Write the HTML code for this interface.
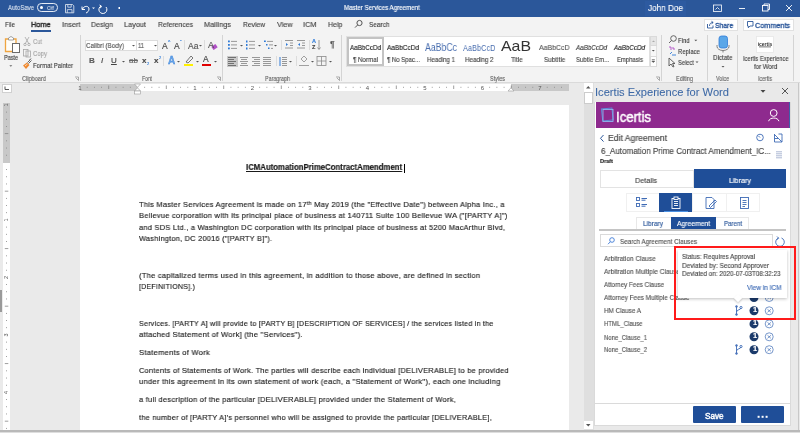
<!DOCTYPE html>
<html><head><meta charset="utf-8">
<style>
*{box-sizing:border-box;margin:0;padding:0}
html,body{width:800px;height:433px;overflow:hidden;background:#F3F3F3;font-family:"Liberation Sans",sans-serif}
.a{position:absolute}
.t{position:absolute;white-space:nowrap;line-height:1;transform-origin:0 0;font-family:"Liberation Sans",sans-serif;z-index:3;will-change:transform;-webkit-text-stroke-width:0.15px}
.d{-webkit-text-stroke:0.18px #1a1a1a}
svg{position:absolute;overflow:visible;will-change:transform}
</style></head><body>
<!-- title bar -->
<div class="a" style="left:0;top:0;width:800px;height:17px;background:#2B579A"></div>
<div class="a" style="left:645px;top:1px;width:41px;height:15px;background:#2D5AA0"></div>
<!-- autosave toggle -->
<div class="a" style="left:37px;top:3.3px;width:20.8px;height:8.4px;border:0.9px solid #E6ECF5;border-radius:4.2px"></div>
<div class="a" style="left:40px;top:5.8px;width:3.4px;height:3.4px;background:#fff;border-radius:50%"></div>
<!-- qat icons -->
<svg style="left:0;top:0" width="800" height="17">
 <g fill="none" stroke="#fff" stroke-width="1">
  <path d="M65.5 4.5 H72.5 L73.8 5.8 V12.8 H65.5 Z" stroke-width="0.85" stroke="#DDE5F0"/>
  <path d="M67.8 4.5 V7.2 H71.2 V4.5" stroke-width="0.8" stroke="#DDE5F0"/>
  <path d="M67.3 12.8 V9.6 H72 V12.8" stroke-width="0.8" stroke="#DDE5F0"/>
  <path d="M82 6.5 L82 9.5 L85 9.5" />
  <path d="M82.5 9 C84 5.5 89 5.5 89 9 C89 11 87.5 12.5 86 13" />
  <path d="M101 6 A4 4 0 1 0 106 7" />
  <path d="M99.5 5 L101.5 6.2 L100.3 8.2" />
 </g>
 <path d="M92 7.5 L95 7.5 L93.5 9 Z" fill="#fff"/>
 <rect x="118.5" y="7" width="1.5" height="2" fill="#fff"/>
 <g fill="none" stroke="#fff" stroke-width="0.9">
  <rect x="713.5" y="5" width="8" height="6.5" stroke-width="0.8"/>
  <path d="M715.5 9.5 L717.5 7.5 L719.5 9.5" stroke-width="0.8"/>
  <path d="M739 8.5 H745"/>
  <rect x="762.5" y="5.5" width="5.5" height="5.5"/>
  <path d="M764 5.5 V4 H769.5 V9.5 H768"/>
  <path d="M786 5 L792 11 M792 5 L786 11"/>
 </g>
</svg>
<!-- tabs row & ribbon bg -->
<div class="a" style="left:0;top:17px;width:800px;height:65px;background:#F3F3F3"></div>
<div class="a" style="left:31px;top:30px;width:20px;height:2px;background:#2B579A"></div>
<!-- search icon -->
<svg style="left:0;top:0" width="800" height="40">
 <g fill="none" stroke="#555" stroke-width="1">
  <circle cx="359.5" cy="23" r="2.6"/>
  <path d="M357.6 25 L355 27.6"/>
 </g>
</svg>
<!-- share / comments -->
<div class="a" style="left:704px;top:19px;width:34px;height:11.5px;background:#fff;border:1px solid #E1E1E1"></div>
<div class="a" style="left:743px;top:19px;width:51px;height:11.5px;background:#fff;border:1px solid #E1E1E1"></div>
<svg style="left:0;top:0" width="800" height="40">
 <g fill="none" stroke="#2B579A" stroke-width="0.9">
  <path d="M707.5 24 V28 H713 V25.5"/>
  <path d="M709.5 26 C709.5 23.5 711 22.5 713 22.5 M711.5 21.3 L713.2 22.5 L711.5 23.8"/>
  <path d="M747.5 21.5 H753 V26 H750 L748.3 27.8 V26 H747.5 Z"/>
 </g>
</svg>
<!-- ribbon bottom border -->
<div class="a" style="left:0;top:81.5px;width:800px;height:1px;background:#DADADA"></div>
<!-- group separators -->
<div class="a" style="left:80px;top:35px;width:1px;height:46px;background:#D4D4D4"></div>
<div class="a" style="left:222px;top:35px;width:1px;height:46px;background:#D4D4D4"></div>
<div class="a" style="left:341px;top:35px;width:1px;height:46px;background:#D4D4D4"></div>
<div class="a" style="left:661px;top:35px;width:1px;height:46px;background:#D4D4D4"></div>
<div class="a" style="left:707px;top:35px;width:1px;height:46px;background:#D4D4D4"></div>
<div class="a" style="left:737px;top:35px;width:1px;height:46px;background:#D4D4D4"></div>
<div class="a" style="left:793px;top:35px;width:1px;height:46px;background:#D4D4D4"></div>
<!-- small separators -->
<div class="a" style="left:184px;top:40px;width:1px;height:10px;background:#DCDCDC"></div>
<div class="a" style="left:204px;top:40px;width:1px;height:10px;background:#DCDCDC"></div>
<div class="a" style="left:163px;top:56px;width:1px;height:10px;background:#DCDCDC"></div>
<div class="a" style="left:281px;top:40px;width:1px;height:10px;background:#DCDCDC"></div>
<div class="a" style="left:309px;top:40px;width:1px;height:10px;background:#DCDCDC"></div>
<div class="a" style="left:276px;top:56px;width:1px;height:10px;background:#DCDCDC"></div>
<div class="a" style="left:296px;top:56px;width:1px;height:10px;background:#DCDCDC"></div>
<!-- font boxes -->
<div class="a" style="left:85px;top:39.5px;width:52px;height:11.5px;background:#fff;border:1px solid #DCDCDC"></div>
<div class="a" style="left:136px;top:39.5px;width:22px;height:11.5px;background:#fff;border:1px solid #DCDCDC"></div>
<!-- align-left highlight -->
<div class="a" style="left:226.5px;top:55.8px;width:11.5px;height:11px;background:#C8C8C8"></div>
<!-- styles gallery -->
<div class="a" style="left:346px;top:35.5px;width:304px;height:31.5px;background:#fff;border:1px solid #E0E0E0"></div>
<div class="a" style="left:347px;top:37px;width:37px;height:29px;border:2px solid #C3C3C3"></div>
<div class="a" style="left:650px;top:35.5px;width:6.5px;height:31.5px;background:#F8F8F8;border:1px solid #E0E0E0"></div>
<div class="a" style="left:650px;top:35.5px;width:6.5px;height:10.5px;background:#E6E6E6;border:1px solid #DADADA"></div>
<div class="a" style="left:650px;top:56px;width:6.5px;height:11px;border:1px solid #DADADA;background:#fff"></div>
<svg style="left:0;top:0" width="800" height="90"><path d="M652 42 h3 l-1.5 -1.5z" fill="#aaa"/><path d="M651.8 59.5 h3 M651.8 61 h3 l-1.5 1.5z" stroke="#555" stroke-width="0.6" fill="#555"/></svg>
<svg style="left:0;top:0" width="800" height="90">
 <!-- ribbon icons -->
 <!-- paste clipboard -->
 <g fill="none" stroke-width="1.2">
  <path d="M5.5 39 H16 V51.5 H5.5 Z" stroke="#EFA540" fill="#FFFDF8" stroke-width="1.3"/>
  <path d="M8.5 40 V38 L11 36.5 L13.5 38 V40 Z" stroke="#8a8a8a" fill="#fff" stroke-width="0.8"/>
  <rect x="12.5" y="43.5" width="7" height="9" stroke="#6B6B6B" fill="#fff" stroke-width="1"/>
 </g>
 <path d="M9.3 65.3 L12.3 65.3 L10.8 66.8 Z" fill="#666"/>
 <!-- cut -->
 <g fill="none" stroke="#A6A6A6" stroke-width="0.8">
  <path d="M25 37 L29 44 M29 37 L25 44"/>
  <circle cx="25" cy="44.5" r="1.2"/><circle cx="29" cy="44.5" r="1.2"/>
  <rect x="23.5" y="49.5" width="4.5" height="6.5"/>
  <rect x="26" y="51" width="4.5" height="6"/>
 </g>
 <!-- format painter -->
 <path d="M23 65.5 L27 62.5 L29.5 65 L26 69 Z" fill="#F08A30"/>
 <path d="M25 66 L27.5 64" stroke="#fff" stroke-width="0.7"/>
 <path d="M27.5 62.5 L30.5 59.5 M28.5 63.5 L31.5 60.5 M29.5 60 L31 58.5" stroke="#555" stroke-width="0.9" fill="none"/>
 <!-- dialog launchers -->
 <g fill="none" stroke="#8a8a8a" stroke-width="0.7">
  <path d="M75 77 H78.5 V80.5 M76 78 L78.5 80.5"/>
  <path d="M217 77 H220.5 V80.5 M218 78 L220.5 80.5"/>
  <path d="M336 77 H339.5 V80.5 M337 78 L339.5 80.5"/>
  <path d="M656 77 H659.5 V80.5 M657 78 L659.5 80.5"/>
 </g>
 <!-- font dropdown arrows -->
 <g fill="#555">
  <path d="M132 45 h3 l-1.5 1.5z"/><path d="M154 45 h3 l-1.5 1.5z"/>
  <path d="M122 61 h3 l-1.5 1.5z"/><path d="M177 61 h3 l-1.5 1.5z"/>
  <path d="M196 61 h3 l-1.5 1.5z"/><path d="M214 61 h3 l-1.5 1.5z"/>
  <path d="M199 45 h3 l-1.5 1.5z"/>
  <path d="M240 45 h3 l-1.5 1.5z"/><path d="M258 45 h3 l-1.5 1.5z"/><path d="M274 45 h3 l-1.5 1.5z"/>
  <path d="M289 61 h3 l-1.5 1.5z"/><path d="M311 61 h3 l-1.5 1.5z"/><path d="M329 61 h3 l-1.5 1.5z"/>
  <path d="M694.3 39.8 h3 l-1.5 1.5z"/><path d="M695.5 61.5 h3 l-1.5 1.5z"/>
  <path d="M721.5 66 h3 l-1.5 1.5z"/>
  <path d="M651.8 50 h3 l-1.5 1.5z"/>
 </g>
</svg>
<!-- font group glyphs -->
<div class="t" style="left:89px;top:56.5px;font-size:8px;font-weight:700;color:#5a5a5a">B</div>
<div class="t" style="left:101px;top:56.5px;font-size:8px;font-style:italic;color:#444">I</div>
<div class="t" style="left:111px;top:56.5px;font-size:8px;text-decoration:underline;color:#444">U</div>
<div class="t" style="left:128.5px;top:56.5px;font-size:8px;text-decoration:line-through;color:#666">ab</div>
<div class="t" style="left:142px;top:57px;font-size:8px;font-weight:700;color:#444">x</div>
<div class="t" style="left:146.5px;top:62px;font-size:4px;color:#2F7BD8">2</div>
<div class="t" style="left:154px;top:57px;font-size:8px;font-weight:700;color:#444">x</div>
<div class="t" style="left:158.5px;top:55.5px;font-size:4px;color:#2F7BD8">2</div>
<div class="t" style="left:162px;top:41.5px;font-size:8.5px;color:#444">A</div>
<div class="t" style="left:167.5px;top:40px;font-size:5px;color:#2F7BD8">^</div>
<div class="t" style="left:174px;top:41.5px;font-size:8.5px;color:#444">A</div>
<div class="t" style="left:179.5px;top:40px;font-size:5px;color:#2F7BD8">&#711;</div>
<div class="t" style="left:188px;top:41.5px;font-size:8.5px;color:#555">Aa</div>
<div class="t" style="left:208px;top:41px;font-size:9px;color:#555">A</div>
<div class="a" style="left:212px;top:45px;width:5px;height:4px;background:#B04FC6;transform:rotate(-35deg)"></div>
<div class="t" style="left:167.5px;top:55.5px;font-size:10px;font-weight:700;color:#6AA6E8;-webkit-text-stroke:0.3px #2F7BD8">A</div>
<div class="a" style="left:184px;top:64px;width:8.5px;height:2px;background:#FFF000"></div>
<svg style="left:0;top:0" width="800" height="90"><path d="M186 62 L191 56 L193 58 L188 63 Z" fill="none" stroke="#555" stroke-width="0.8"/></svg>
<div class="t" style="left:202.5px;top:55px;font-size:8.5px;color:#444">A</div>
<div class="a" style="left:202px;top:64px;width:9px;height:2px;background:#E00000"></div>
<!-- paragraph icons -->
<svg style="left:0;top:0" width="800" height="90">
 <g fill="#2F7BD8">
  <rect x="228" y="40.5" width="1.8" height="1.8"/><rect x="228" y="44" width="1.8" height="1.8"/><rect x="228" y="47.5" width="1.8" height="1.8"/>
  <rect x="246" y="40.5" width="1.5" height="2"/><rect x="246" y="44" width="1.5" height="2"/><rect x="246" y="47.5" width="1.5" height="2"/>
  <rect x="264" y="40.5" width="1.8" height="1.5"/><rect x="266" y="44" width="1.5" height="1.5"/><rect x="268" y="47.5" width="1.5" height="1.5"/>
  <path d="M286 43 l2 1.5 l-2 1.5z"/><path d="M300 43 l-2 1.5 l2 1.5z"/>
  <rect x="279.5" y="57" width="1" height="9"/>
 </g>
 <g stroke="#808080" stroke-width="0.8">
  <path d="M231 41.4 H237 M231 44.9 H237 M231 48.4 H237"/>
  <path d="M249 41.4 H255 M249 44.9 H255 M249 48.4 H255"/>
  <path d="M267 41.4 H273 M269 44.9 H273 M271 48.4 H273"/>
  <path d="M285 40.5 H293 M290 43 H293 M290 45.5 H293 M285 48 H293"/>
  <path d="M297 40.5 H305 M302 43 H305 M302 45.5 H305 M297 48 H305"/>
  <path d="M228 57.5 H236 M228 59.5 H234 M228 61.5 H236 M228 63.5 H234 M228 65.5 H236" stroke="#5a5a5a"/>
  <path d="M240 57.5 H248 M241 59.5 H247 M240 61.5 H248 M241 63.5 H247 M240 65.5 H248"/>
  <path d="M252 57.5 H260 M254 59.5 H260 M252 61.5 H260 M254 63.5 H260 M252 65.5 H260"/>
  <path d="M263 57.5 H271 M263 59.5 H271 M263 61.5 H271 M263 63.5 H271 M263 65.5 H271"/>
  <path d="M282 57.5 H287 M282 59.5 H287 M282 61.5 H287 M282 63.5 H287 M282 65.5 H287"/>
  <path d="M319 49 V40" />
 </g>
 <path d="M317.5 47.5 L319 49.5 L320.5 47.5" fill="none" stroke="#808080" stroke-width="0.8"/>
 <g fill="none" stroke="#8a8a8a" stroke-width="0.8">
  <rect x="317" y="56.5" width="9" height="9"/>
  <path d="M321.5 56.5 V65.5 M317 61 H326"/>
  <path d="M301 59 L304 56 L307 59 L304 62 Z"/>
  <path d="M299 65.5 H309"/>
 </g>
</svg>
<div class="t" style="left:312px;top:39px;font-size:5.5px;font-weight:700;color:#2F7BD8">A</div>
<div class="t" style="left:312px;top:44.5px;font-size:5.5px;font-weight:700;color:#444">Z</div>
<div class="t" style="left:329.5px;top:40px;font-size:9px;font-weight:400;color:#555">&#182;</div>
<!-- editing/voice/icertis icons -->
<svg style="left:0;top:0" width="800" height="90">
 <g fill="none" stroke="#555" stroke-width="0.9">
  <circle cx="673.5" cy="38.5" r="2.8"/><path d="M671.5 40.5 L669 43"/>
  <path d="M669 58 L669 66 L671 64 L673 67 L674 66.5 L672.5 63.5 L675 63.5 Z"/>
 </g>
 <g fill="none" stroke-width="0.9">
  <path d="M669 47 h2 v3" stroke="#B04FC6"/><path d="M673 47 v2 h2" stroke="#B04FC6"/>
  <path d="M670 54 l2 -2 M672 55 h4" stroke="#2F7BD8"/>
 </g>
 <rect x="719" y="36" width="8.5" height="12" rx="2.5" fill="#5BA7E8" stroke="#2F7BD8" stroke-width="0.8"/>
 <path d="M717 45 v1.5 a6 4 0 0 0 12 0 v-1.5 M723 50.5 v2" fill="none" stroke="#666" stroke-width="0.8"/>
 <rect x="756.5" y="36.5" width="17" height="16" fill="#fff" stroke="#E6E6E6" stroke-width="0.8"/>
 <text x="765" y="45.5" font-size="5" font-weight="700" text-anchor="middle" fill="#333" font-family="Liberation Sans">icertis</text><rect x="759" y="46.5" width="12" height="0.8" fill="#555"/>
</svg>
<!-- ========== document area ========== -->
<div class="a" style="left:0;top:82.5px;width:593px;height:348px;background:#EAEAEA"></div>
<!-- ruler -->
<div class="a" style="left:2px;top:84px;width:10px;height:8.5px;background:#fff;border:1px solid #D0D0D0"></div>
<svg style="left:0;top:0" width="20" height="100"><path d="M5 86.5 V89.5 H9" fill="none" stroke="#444" stroke-width="0.9"/></svg>
<div class="a" style="left:80px;top:84px;width:489px;height:6.5px;background:#C8C8C8"></div>
<div class="a" style="left:137.5px;top:84px;width:373.5px;height:6.5px;background:#fff"></div>
<svg style="left:0;top:0" width="600" height="100" id="ruler">
 <g fill="#888">
<text x="80.00" y="89.7" font-size="6" text-anchor="middle" fill="#555" font-family="Liberation Sans">1</text>
<rect x="86.79" y="86.8" width="0.8" height="1"/>
<rect x="93.97" y="86.8" width="0.8" height="1"/>
<rect x="101.16" y="86.8" width="0.8" height="1"/>
<rect x="108.35" y="85.5" width="0.8" height="3.5"/>
<rect x="115.54" y="86.8" width="0.8" height="1"/>
<rect x="122.72" y="86.8" width="0.8" height="1"/>
<rect x="129.91" y="86.8" width="0.8" height="1"/>
<rect x="144.29" y="86.8" width="0.8" height="1"/>
<rect x="151.47" y="86.8" width="0.8" height="1"/>
<rect x="158.66" y="86.8" width="0.8" height="1"/>
<rect x="165.85" y="85.5" width="0.8" height="3.5"/>
<rect x="173.04" y="86.8" width="0.8" height="1"/>
<rect x="180.22" y="86.8" width="0.8" height="1"/>
<rect x="187.41" y="86.8" width="0.8" height="1"/>
<text x="195.00" y="89.7" font-size="6" text-anchor="middle" fill="#555" font-family="Liberation Sans">1</text>
<rect x="201.79" y="86.8" width="0.8" height="1"/>
<rect x="208.97" y="86.8" width="0.8" height="1"/>
<rect x="216.16" y="86.8" width="0.8" height="1"/>
<rect x="223.35" y="85.5" width="0.8" height="3.5"/>
<rect x="230.54" y="86.8" width="0.8" height="1"/>
<rect x="237.72" y="86.8" width="0.8" height="1"/>
<rect x="244.91" y="86.8" width="0.8" height="1"/>
<text x="252.50" y="89.7" font-size="6" text-anchor="middle" fill="#555" font-family="Liberation Sans">2</text>
<rect x="259.29" y="86.8" width="0.8" height="1"/>
<rect x="266.48" y="86.8" width="0.8" height="1"/>
<rect x="273.66" y="86.8" width="0.8" height="1"/>
<rect x="280.85" y="85.5" width="0.8" height="3.5"/>
<rect x="288.04" y="86.8" width="0.8" height="1"/>
<rect x="295.23" y="86.8" width="0.8" height="1"/>
<rect x="302.41" y="86.8" width="0.8" height="1"/>
<text x="310.00" y="89.7" font-size="6" text-anchor="middle" fill="#555" font-family="Liberation Sans">3</text>
<rect x="316.79" y="86.8" width="0.8" height="1"/>
<rect x="323.98" y="86.8" width="0.8" height="1"/>
<rect x="331.16" y="86.8" width="0.8" height="1"/>
<rect x="338.35" y="85.5" width="0.8" height="3.5"/>
<rect x="345.54" y="86.8" width="0.8" height="1"/>
<rect x="352.73" y="86.8" width="0.8" height="1"/>
<rect x="359.91" y="86.8" width="0.8" height="1"/>
<text x="367.50" y="89.7" font-size="6" text-anchor="middle" fill="#555" font-family="Liberation Sans">4</text>
<rect x="374.29" y="86.8" width="0.8" height="1"/>
<rect x="381.48" y="86.8" width="0.8" height="1"/>
<rect x="388.66" y="86.8" width="0.8" height="1"/>
<rect x="395.85" y="85.5" width="0.8" height="3.5"/>
<rect x="403.04" y="86.8" width="0.8" height="1"/>
<rect x="410.23" y="86.8" width="0.8" height="1"/>
<rect x="417.41" y="86.8" width="0.8" height="1"/>
<text x="425.00" y="89.7" font-size="6" text-anchor="middle" fill="#555" font-family="Liberation Sans">5</text>
<rect x="431.79" y="86.8" width="0.8" height="1"/>
<rect x="438.98" y="86.8" width="0.8" height="1"/>
<rect x="446.16" y="86.8" width="0.8" height="1"/>
<rect x="453.35" y="85.5" width="0.8" height="3.5"/>
<rect x="460.54" y="86.8" width="0.8" height="1"/>
<rect x="467.73" y="86.8" width="0.8" height="1"/>
<rect x="474.91" y="86.8" width="0.8" height="1"/>
<text x="482.50" y="89.7" font-size="6" text-anchor="middle" fill="#555" font-family="Liberation Sans">6</text>
<rect x="489.29" y="86.8" width="0.8" height="1"/>
<rect x="496.48" y="86.8" width="0.8" height="1"/>
<rect x="503.66" y="86.8" width="0.8" height="1"/>
<rect x="510.85" y="85.5" width="0.8" height="3.5"/>
<rect x="518.04" y="86.8" width="0.8" height="1"/>
<rect x="525.23" y="86.8" width="0.8" height="1"/>
<rect x="532.41" y="86.8" width="0.8" height="1"/>
<text x="540.00" y="89.7" font-size="6" text-anchor="middle" fill="#555" font-family="Liberation Sans">7</text>
<rect x="546.79" y="86.8" width="0.8" height="1"/>
<rect x="553.98" y="86.8" width="0.8" height="1"/>
<rect x="561.16" y="86.8" width="0.8" height="1"/>
 </g>
 <path d="M134.5 84 L140.5 84 L137.5 87.3 Z" fill="#fff" stroke="#999" stroke-width="0.6"/>
 <path d="M134.5 91 L137.5 87.8 L140.5 91 Z" fill="#fff" stroke="#999" stroke-width="0.6"/>
 <rect x="134.5" y="91" width="6" height="3" fill="#fff" stroke="#999" stroke-width="0.6"/>
 <path d="M508 91 L511 87.8 L514 91 Z" fill="#fff" stroke="#999" stroke-width="0.6"/>
</svg>
<!-- vertical ruler -->
<div class="a" style="left:3px;top:103px;width:7px;height:327px;background:#fff"></div>
<div class="a" style="left:3px;top:103px;width:7px;height:59.5px;background:#C8C8C8"></div>
<svg style="left:0;top:0" width="20" height="433">
 <g fill="#888">
<text x="6.5" y="106.90" font-size="5.5" text-anchor="middle" fill="#555" font-family="Liberation Sans" transform="rotate(-90 6.5 104.90)">1</text>
<rect x="6" y="111.69" width="1" height="0.8"/>
<rect x="6" y="118.88" width="1" height="0.8"/>
<rect x="6" y="126.06" width="1" height="0.8"/>
<rect x="4.8" y="133.25" width="3.5" height="0.8"/>
<rect x="6" y="140.44" width="1" height="0.8"/>
<rect x="6" y="147.62" width="1" height="0.8"/>
<rect x="6" y="154.81" width="1" height="0.8"/>
<rect x="6" y="169.19" width="1" height="0.8"/>
<rect x="6" y="176.38" width="1" height="0.8"/>
<rect x="6" y="183.56" width="1" height="0.8"/>
<rect x="4.8" y="190.75" width="3.5" height="0.8"/>
<rect x="6" y="197.94" width="1" height="0.8"/>
<rect x="6" y="205.12" width="1" height="0.8"/>
<rect x="6" y="212.31" width="1" height="0.8"/>
<text x="6.5" y="221.90" font-size="5.5" text-anchor="middle" fill="#555" font-family="Liberation Sans" transform="rotate(-90 6.5 219.90)">1</text>
<rect x="6" y="226.69" width="1" height="0.8"/>
<rect x="6" y="233.88" width="1" height="0.8"/>
<rect x="6" y="241.06" width="1" height="0.8"/>
<rect x="4.8" y="248.25" width="3.5" height="0.8"/>
<rect x="6" y="255.44" width="1" height="0.8"/>
<rect x="6" y="262.62" width="1" height="0.8"/>
<rect x="6" y="269.81" width="1" height="0.8"/>
<text x="6.5" y="279.40" font-size="5.5" text-anchor="middle" fill="#555" font-family="Liberation Sans" transform="rotate(-90 6.5 277.40)">2</text>
<rect x="6" y="284.19" width="1" height="0.8"/>
<rect x="6" y="291.38" width="1" height="0.8"/>
<rect x="6" y="298.56" width="1" height="0.8"/>
<rect x="4.8" y="305.75" width="3.5" height="0.8"/>
<rect x="6" y="312.94" width="1" height="0.8"/>
<rect x="6" y="320.12" width="1" height="0.8"/>
<rect x="6" y="327.31" width="1" height="0.8"/>
<text x="6.5" y="336.90" font-size="5.5" text-anchor="middle" fill="#555" font-family="Liberation Sans" transform="rotate(-90 6.5 334.90)">3</text>
<rect x="6" y="341.69" width="1" height="0.8"/>
<rect x="6" y="348.88" width="1" height="0.8"/>
<rect x="6" y="356.06" width="1" height="0.8"/>
<rect x="4.8" y="363.25" width="3.5" height="0.8"/>
<rect x="6" y="370.44" width="1" height="0.8"/>
<rect x="6" y="377.62" width="1" height="0.8"/>
<rect x="6" y="384.81" width="1" height="0.8"/>
<text x="6.5" y="394.40" font-size="5.5" text-anchor="middle" fill="#555" font-family="Liberation Sans" transform="rotate(-90 6.5 392.40)">4</text>
<rect x="6" y="399.19" width="1" height="0.8"/>
<rect x="6" y="406.38" width="1" height="0.8"/>
<rect x="6" y="413.56" width="1" height="0.8"/>
<rect x="4.8" y="420.75" width="3.5" height="0.8"/>
<rect x="6" y="427.94" width="1" height="0.8"/>
 </g>
</svg>
<div class="a" style="left:0;top:290px;width:1.5px;height:22px;background:#9A9A9A"></div>
<!-- page -->
<div class="a" style="left:80px;top:105px;width:489px;height:330px;background:#fff"></div>
<div class="a" style="left:403.6px;top:163.5px;width:0.9px;height:9px;background:#000;z-index:4"></div>
<!-- scrollbar -->
<div class="a" style="left:583.8px;top:82.5px;width:10.5px;height:348px;background:#DFDFDF"></div>
<div class="a" style="left:584px;top:83px;width:8.5px;height:8.5px;background:#fff"></div>
<div class="a" style="left:584px;top:92px;width:8.5px;height:11.5px;background:#fff;border:0.5px solid #ccc"></div>
<div class="a" style="left:584px;top:421px;width:8.5px;height:8px;background:#fff"></div>
<svg style="left:0;top:0" width="800" height="433">
 <path d="M586 88.5 L588.25 86 L590.5 88.5 Z" fill="#555"/>
 <path d="M586 424 L588.25 426.5 L590.5 424 Z" fill="#555"/>
</svg>
<!-- ========== task pane ========== -->
<div class="a" style="left:594px;top:82.5px;width:206px;height:348px;background:#E9E9E9"></div>
<div class="a" style="left:798px;top:82.5px;width:1px;height:348px;background:#C8C8C8"></div>
<svg style="left:0;top:0" width="800" height="433">
 <path d="M760.5 90 L765.5 90 L763 92.8 Z" fill="#444"/>
 <path d="M782 88 L788 94 M788 88 L782 94" stroke="#444" stroke-width="0.9" fill="none"/>
</svg>
<!-- pane white -->
<div class="a" style="left:594.2px;top:102px;width:196.8px;height:323.5px;background:#fff;border:1px solid #DADADA;border-top:none"></div>
<div class="a" style="left:595.7px;top:102px;width:194.8px;height:26.3px;background:#8E2A8E;border-right:1px solid #3F5FA8"></div>
<svg style="left:0;top:0" width="800" height="433">
 <rect x="602" y="108.5" width="10.5" height="12" fill="none" stroke="#5B8FD9" stroke-width="1" transform="rotate(-6 607 114)"/>
 <rect x="603" y="109.5" width="10" height="12" fill="none" stroke="#8FB5EE" stroke-width="0.9"/>
 <g fill="none" stroke="#fff" stroke-width="1">
  <circle cx="773.7" cy="113" r="3.4"/>
  <path d="M768.6 121.2 C769.5 117 778 117 778.9 121.2"/>
 </g>
 <!-- edit agreement row icons -->
 <path d="M603.5 135 L600.5 138.3 L603.5 141.6" fill="none" stroke="#2B579A" stroke-width="1"/>
 <g fill="none" stroke="#3E6BB5" stroke-width="0.9">
  <circle cx="760" cy="137.5" r="3.3"/><path d="M758.5 136 L760 137.5"/>
  <path d="M774.5 134 V142 H782 V136.5 M774.5 134.5 L782 142 M778.5 134 H782 V136.5 M774.5 138.5 H778"/>
  <path d="M776 151.8 H782 M776 153.8 H782 M776 155.8 H782 M776 157.8 H782" stroke="#8A9BC0" stroke-width="0.7"/>
 </g>
</svg>
<!-- details/library toggle -->
<div class="a" style="left:599.5px;top:169.5px;width:94.3px;height:18.5px;background:#fff;border:1px solid #E3E3E3"></div>
<div class="a" style="left:693.8px;top:169.2px;width:92.4px;height:18.5px;background:#1F4E98"></div>
<!-- icon tabs -->
<div class="a" style="left:625.5px;top:193.3px;width:134.5px;height:18.7px;background:#fff;border:1px solid #F0F0F0"></div>
<div class="a" style="left:659.3px;top:193.3px;width:33px;height:18.7px;background:#1F4E98"></div>
<div class="a" style="left:664px;top:210.8px;width:24px;height:1.2px;background:#4A90E2"></div>
<div class="a" style="left:692.3px;top:193.3px;width:1px;height:18.7px;background:#F0F0F0"></div>
<div class="a" style="left:726.3px;top:193.3px;width:1px;height:18.7px;background:#F0F0F0"></div>
<svg style="left:0;top:0" width="800" height="433">
 <g fill="none" stroke="#3E6BB5" stroke-width="0.9">
  <rect x="636.5" y="197.5" width="3" height="3"/><rect x="636.5" y="203.5" width="3" height="3"/>
  <path d="M641.5 198.5 H647 M641.5 200.2 H645.5 M641.5 204.5 H647 M641.5 206.2 H645.5" stroke-width="1"/>
  <path d="M706 197.5 H712 L714 199.5 V208.5 H706 Z"/>
  <path d="M709 206 L715 200 L716.5 201.5 L710.5 207.5 Z"/>
  <rect x="740.5" y="197.5" width="8" height="11"/>
  <path d="M742.5 200.5 H746.5 M742.5 202.5 H746.5 M742.5 204.5 H746.5 M742.5 206.5 H745"/>
 </g>
 <g fill="none" stroke="#fff" stroke-width="0.9">
  <rect x="672" y="198.5" width="8" height="10"/>
  <rect x="674" y="197" width="4" height="2.5" fill="#1F4E98"/>
  <path d="M674 201.5 H678 M674 203.5 H678 M674 205.5 H678"/>
 </g>
</svg>
<!-- sub tabs -->
<div class="a" style="left:636px;top:217px;width:113px;height:12.3px;background:#fff;border:1px solid #E8E8E8;border-bottom:none"></div>
<div class="a" style="left:671px;top:217px;width:45.2px;height:12.3px;background:#1F4E98"></div>
<div class="a" style="left:599.2px;top:229.2px;width:187.3px;height:1.8px;background:#C4C4C4"></div>
<!-- search -->
<div class="a" style="left:599.6px;top:234.2px;width:173px;height:13.2px;background:#fff;border:1px solid #DADADA"></div>
<svg style="left:0;top:0" width="800" height="433">
 <g fill="none" stroke="#3E7BD6" stroke-width="0.9">
  <circle cx="612" cy="240" r="2.3"/><path d="M610.3 241.8 L608 244.2"/>
 </g>
 <g fill="none" stroke="#3E6BB5" stroke-width="0.9">
  <path d="M778.5 238 A4.3 4.3 0 1 0 781.5 238"/>
  <path d="M777 236.5 L778.7 238.2 L776.8 239.6"/>
 </g>
</svg>
<!-- list icons -->
<svg style="left:0;top:0" width="800" height="433" style="z-index:2">
 <g fill="#1B3A6B">
  <circle cx="754" cy="297.5" r="4.5"/>
  <circle cx="754" cy="310.8" r="4.5"/>
  <circle cx="754" cy="323.9" r="4.5"/>
  <circle cx="754" cy="336.8" r="4.5"/>
  <circle cx="754" cy="349.7" r="4.5"/>
 </g>
 <g fill="none" stroke="#3E6BB5" stroke-width="0.7">
  <circle cx="769.2" cy="297.5" r="4"/><circle cx="769.2" cy="310.8" r="4"/><circle cx="769.2" cy="323.9" r="4"/>
  <circle cx="769.2" cy="336.8" r="4"/><circle cx="769.2" cy="349.7" r="4"/>
  <path d="M767.5 296 l3.4 3 M770.9 296 l-3.4 3 M767.5 309.3 l3.4 3 M770.9 309.3 l-3.4 3 M767.5 322.4 l3.4 3 M770.9 322.4 l-3.4 3 M767.5 335.3 l3.4 3 M770.9 335.3 l-3.4 3 M767.5 348.2 l3.4 3 M770.9 348.2 l-3.4 3"/>
 </g>
 <g fill="none" stroke="#3E6BB5" stroke-width="0.9">
  <path d="M736.5 306 V315 M736.5 312 C736.5 309.5 741 310 741 308"/>
  <circle cx="736.5" cy="306.5" r="0.9"/><circle cx="741" cy="307.5" r="1.1"/><circle cx="736.5" cy="314.5" r="0.9"/>
  <path d="M736.5 345 V354 M736.5 351 C736.5 348.5 741 349 741 347"/>
  <circle cx="736.5" cy="345.5" r="0.9"/><circle cx="741" cy="346.5" r="1.1"/><circle cx="736.5" cy="353.5" r="0.9"/>
 </g>
</svg>
<div class="t" style="left:752.6px;top:305.9px;font-size:7.5px;font-weight:700;color:#fff">1</div>
<div class="t" style="left:752.6px;top:319.0px;font-size:7.5px;font-weight:700;color:#fff">1</div>
<div class="t" style="left:752.6px;top:331.9px;font-size:7.5px;font-weight:700;color:#fff">1</div>
<div class="t" style="left:752.6px;top:344.8px;font-size:7.5px;font-weight:700;color:#fff">1</div>
<!-- tooltip -->
<div class="a" style="left:678.3px;top:250px;width:108.5px;height:47.8px;background:#fff;box-shadow:0 1px 3px rgba(0,0,0,0.25);z-index:5"></div>
<div class="a" style="left:735px;top:295px;width:6px;height:6px;background:#fff;transform:rotate(45deg);box-shadow:1px 1px 2px rgba(0,0,0,0.18);z-index:5"></div>
<!-- red box -->
<div class="a" style="left:674.1px;top:246.2px;width:122.1px;height:73.8px;border:2px solid #FF1A1A;z-index:7"></div>
<!-- bottom buttons -->
<div class="a" style="left:595px;top:403px;width:195.5px;height:1px;background:#DADADA"></div>
<div class="a" style="left:692.7px;top:406.1px;width:43.5px;height:17px;background:#1F4E98;border-radius:1px"></div>
<div class="a" style="left:740.7px;top:406.1px;width:43.6px;height:17px;background:#1F4E98;border-radius:1px"></div>
<svg style="left:0;top:0" width="800" height="433">
 <g fill="#fff"><rect x="757.6" y="415.8" width="2" height="2"/><rect x="761.6" y="415.8" width="2" height="2"/><rect x="765.6" y="415.8" width="2" height="2"/></g>
</svg>
<!-- bottom status line -->
<div class="a" style="left:0;top:430px;width:800px;height:1.5px;background:#B9B9B9"></div>
<div class="a" style="left:0;top:431.5px;width:800px;height:1.5px;background:#DEDEDE"></div>
<div class="t" style="left:8.10px;top:4.20px;font-size:7.4px;color:#E8EEF6;font-weight:400;transform:scaleX(0.8109);-webkit-text-stroke-width:0.05px;">AutoSave</div>
<div class="t" style="left:47.00px;top:4.80px;font-size:6px;color:#E8EEF6;font-weight:400;transform:scaleX(0.8854);-webkit-text-stroke-width:0;">Off</div>
<div class="t" style="left:343.75px;top:4.00px;font-size:7.2px;color:#fff;font-weight:400;transform:scaleX(0.8579);">Master Services Agreement</div>
<div class="t" style="left:647.50px;top:4.30px;font-size:9px;color:#fff;font-weight:400;transform:scaleX(0.9084);">John Doe</div>
<div class="t" style="left:5.00px;top:21.30px;font-size:8px;color:#444;font-weight:400;transform:scaleX(0.7758);">File</div>
<div class="t" style="left:31.00px;top:21.30px;font-size:8px;color:#262626;font-weight:400;transform:scaleX(0.9136);-webkit-text-stroke-width:0.4px;">Home</div>
<div class="t" style="left:61.50px;top:21.30px;font-size:8px;color:#444;font-weight:400;transform:scaleX(0.9243);">Insert</div>
<div class="t" style="left:90.50px;top:21.30px;font-size:8px;color:#444;font-weight:400;transform:scaleX(0.8833);">Design</div>
<div class="t" style="left:123.50px;top:21.30px;font-size:8px;color:#444;font-weight:400;transform:scaleX(0.9155);">Layout</div>
<div class="t" style="left:157.50px;top:21.30px;font-size:8px;color:#444;font-weight:400;transform:scaleX(0.8553);">References</div>
<div class="t" style="left:203.50px;top:21.30px;font-size:8px;color:#444;font-weight:400;transform:scaleX(0.9201);">Mailings</div>
<div class="t" style="left:242.50px;top:21.30px;font-size:8px;color:#444;font-weight:400;transform:scaleX(0.8386);">Review</div>
<div class="t" style="left:276.50px;top:21.30px;font-size:8px;color:#444;font-weight:400;transform:scaleX(0.9010);">View</div>
<div class="t" style="left:303.00px;top:21.30px;font-size:8px;color:#444;font-weight:400;transform:scaleX(0.9201);">ICM</div>
<div class="t" style="left:328.00px;top:21.30px;font-size:8px;color:#444;font-weight:400;transform:scaleX(0.8813);">Help</div>
<div class="t" style="left:368.50px;top:21.30px;font-size:8px;color:#444;font-weight:400;transform:scaleX(0.8084);">Search</div>
<div class="t" style="left:715.00px;top:22.00px;font-size:7.8px;color:#2B579A;font-weight:400;transform:scaleX(0.8769);-webkit-text-stroke-width:0.35px;">Share</div>
<div class="t" style="left:755.00px;top:22.00px;font-size:7.8px;color:#2B579A;font-weight:400;transform:scaleX(0.9283);-webkit-text-stroke-width:0.35px;">Comments</div>
<div class="t" style="left:4.00px;top:54.00px;font-size:7.5px;color:#444;font-weight:400;transform:scaleX(0.7296);">Paste</div>
<div class="t" style="left:33.00px;top:38.20px;font-size:7.5px;color:#A6A6A6;font-weight:400;transform:scaleX(0.7711);">Cut</div>
<div class="t" style="left:33.00px;top:50.20px;font-size:7.5px;color:#A6A6A6;font-weight:400;transform:scaleX(0.7993);">Copy</div>
<div class="t" style="left:33.00px;top:62.30px;font-size:7.5px;color:#444;font-weight:400;transform:scaleX(0.8063);">Format Painter</div>
<div class="t" style="left:22.00px;top:74.70px;font-size:7px;color:#666;font-weight:400;transform:scaleX(0.8008);">Clipboard</div>
<div class="t" style="left:86.00px;top:42.00px;font-size:7.5px;color:#555;font-weight:400;transform:scaleX(0.8363);">Calibri (Body)</div>
<div class="t" style="left:138.00px;top:42.00px;font-size:7.5px;color:#555;font-weight:400;transform:scaleX(0.7695);">11</div>
<div class="t" style="left:142.00px;top:74.70px;font-size:7px;color:#666;font-weight:400;transform:scaleX(0.7135);">Font</div>
<div class="t" style="left:265.00px;top:74.70px;font-size:7px;color:#666;font-weight:400;transform:scaleX(0.7645);">Paragraph</div>
<div class="t" style="left:490.00px;top:74.70px;font-size:7px;color:#666;font-weight:400;transform:scaleX(0.7869);">Styles</div>
<div class="t" style="left:676.00px;top:74.70px;font-size:7px;color:#666;font-weight:400;transform:scaleX(0.7942);">Editing</div>
<div class="t" style="left:716.00px;top:74.70px;font-size:7px;color:#666;font-weight:400;transform:scaleX(0.7591);">Voice</div>
<div class="t" style="left:758.00px;top:74.70px;font-size:7px;color:#666;font-weight:400;transform:scaleX(0.7498);">Icertis</div>
<div class="t" style="left:678.00px;top:37.00px;font-size:7.5px;color:#444;font-weight:400;transform:scaleX(0.7880);">Find</div>
<div class="t" style="left:678.00px;top:48.00px;font-size:7.5px;color:#444;font-weight:400;transform:scaleX(0.7991);">Replace</div>
<div class="t" style="left:678.00px;top:59.30px;font-size:7.5px;color:#444;font-weight:400;transform:scaleX(0.7670);">Select</div>
<div class="t" style="left:713.00px;top:54.30px;font-size:7.5px;color:#444;font-weight:400;transform:scaleX(0.8353);">Dictate</div>
<div class="t" style="left:742.50px;top:54.80px;font-size:7.2px;color:#444;font-weight:400;transform:scaleX(0.7965);">Icertis Experience</div>
<div class="t" style="left:753.75px;top:63.00px;font-size:7.2px;color:#444;font-weight:400;transform:scaleX(0.8474);">for Word</div>
<div class="t" style="left:350.00px;top:44.00px;font-size:7.5px;color:#262626;font-weight:400;transform:scaleX(0.8354);">AaBbCcDd</div>
<div class="t" style="left:353.00px;top:55.80px;font-size:7.2px;color:#444;font-weight:400;transform:scaleX(0.8611);">¶ Normal</div>
<div class="t" style="left:387.00px;top:44.00px;font-size:7.5px;color:#262626;font-weight:400;transform:scaleX(0.8623);">AaBbCcDd</div>
<div class="t" style="left:387.00px;top:55.80px;font-size:7.2px;color:#444;font-weight:400;transform:scaleX(0.8371);">¶ No Spac...</div>
<div class="t" style="left:425.00px;top:42.00px;font-size:10.5px;color:#4A6FB0;font-weight:400;transform:scaleX(0.8305);-webkit-text-stroke-width:0;">AaBbCc</div>
<div class="t" style="left:427.00px;top:55.80px;font-size:7.2px;color:#444;font-weight:400;transform:scaleX(0.8541);">Heading 1</div>
<div class="t" style="left:462.50px;top:43.50px;font-size:9px;color:#4A6FB0;font-weight:400;transform:scaleX(0.8225);-webkit-text-stroke-width:0;">AaBbCcD</div>
<div class="t" style="left:464.50px;top:55.80px;font-size:7.2px;color:#444;font-weight:400;transform:scaleX(0.8694);">Heading 2</div>
<div class="t" style="left:501.00px;top:37.80px;font-size:15px;color:#333;font-weight:400;transform:scaleX(1.0579);-webkit-text-stroke-width:0;">AaB</div>
<div class="t" style="left:510.75px;top:55.80px;font-size:7.2px;color:#444;font-weight:400;transform:scaleX(0.8826);">Title</div>
<div class="t" style="left:539.00px;top:44.00px;font-size:7.5px;color:#5A5A5A;font-weight:400;transform:scaleX(0.9260);">AaBbCcD</div>
<div class="t" style="left:543.75px;top:55.80px;font-size:7.2px;color:#444;font-weight:400;transform:scaleX(0.8860);">Subtitle</div>
<div class="t" style="left:576.00px;top:44.00px;font-size:7.5px;color:#404040;font-weight:400;transform:scaleX(0.8354);font-style:italic;">AaBbCcDd</div>
<div class="t" style="left:575.75px;top:55.80px;font-size:7.2px;color:#444;font-weight:400;transform:scaleX(0.8428);">Subtle Em...</div>
<div class="t" style="left:614.00px;top:44.00px;font-size:7.5px;color:#262626;font-weight:400;transform:scaleX(0.8354);font-style:italic;">AaBbCcDd</div>
<div class="t" style="left:617.00px;top:55.80px;font-size:7.2px;color:#444;font-weight:400;transform:scaleX(0.8238);">Emphasis</div>
<div class="t" style="left:246.40px;top:163.20px;font-size:8.6px;color:#1a1a1a;font-weight:700;transform:scaleX(0.9056);text-decoration:underline;-webkit-text-stroke-width:0.2px;">ICMAutomationPrimeContractAmendment</div>
<div class="t" style="left:138.50px;top:200.80px;font-size:8.1px;color:#1a1a1a;font-weight:400;transform:scaleX(0.9270);-webkit-text-stroke:0.15px #1a1a1a;letter-spacing:0.25px;">This Master Services Agreement is made on 17ᵗʰ May 2019 (the &quot;Effective Date&quot;) between Alpha Inc., a</div>
<div class="t" style="left:138.50px;top:212.30px;font-size:8.1px;color:#1a1a1a;font-weight:400;transform:scaleX(0.9289);-webkit-text-stroke:0.15px #1a1a1a;letter-spacing:0.25px;">Bellevue corporation with its principal place of business at 140711 Suite 100 Bellevue WA (&quot;[PARTY A]&quot;)</div>
<div class="t" style="left:138.50px;top:223.70px;font-size:8.1px;color:#1a1a1a;font-weight:400;transform:scaleX(0.9221);-webkit-text-stroke:0.15px #1a1a1a;letter-spacing:0.25px;">and SDS Ltd., a Washington DC corporation with its principal place of business at 5200 MacArthur Blvd,</div>
<div class="t" style="left:138.50px;top:235.20px;font-size:8.1px;color:#1a1a1a;font-weight:400;transform:scaleX(0.9129);-webkit-text-stroke:0.15px #1a1a1a;letter-spacing:0.25px;">Washington, DC 20016 (&quot;[PARTY B]&quot;).</div>
<div class="t" style="left:138.50px;top:272.30px;font-size:8.1px;color:#1a1a1a;font-weight:400;transform:scaleX(0.9318);-webkit-text-stroke:0.15px #1a1a1a;letter-spacing:0.25px;">(The capitalized terms used in this agreement, in addition to those above, are defined in section</div>
<div class="t" style="left:138.50px;top:283.20px;font-size:8.1px;color:#1a1a1a;font-weight:400;transform:scaleX(0.8704);-webkit-text-stroke:0.15px #1a1a1a;letter-spacing:0.25px;">[DEFINITIONS].)</div>
<div class="t" style="left:138.50px;top:319.70px;font-size:8.1px;color:#1a1a1a;font-weight:400;transform:scaleX(0.8823);-webkit-text-stroke:0.15px #1a1a1a;letter-spacing:0.25px;">Services. [PARTY A] will provide to [PARTY B] [DESCRIPTION OF SERVICES] / the services listed in the</div>
<div class="t" style="left:138.50px;top:330.50px;font-size:8.1px;color:#1a1a1a;font-weight:400;transform:scaleX(0.9421);-webkit-text-stroke:0.15px #1a1a1a;letter-spacing:0.25px;">attached Statement of Work] (the &quot;Services&quot;).</div>
<div class="t" style="left:138.50px;top:348.50px;font-size:8.1px;color:#1a1a1a;font-weight:400;transform:scaleX(0.9399);-webkit-text-stroke:0.15px #1a1a1a;letter-spacing:0.25px;">Statements of Work</div>
<div class="t" style="left:138.50px;top:366.80px;font-size:8.1px;color:#1a1a1a;font-weight:400;transform:scaleX(0.9182);-webkit-text-stroke:0.15px #1a1a1a;letter-spacing:0.25px;">Contents of Statements of Work. The parties will describe each individual [DELIVERABLE] to be provided</div>
<div class="t" style="left:138.50px;top:378.10px;font-size:8.1px;color:#1a1a1a;font-weight:400;transform:scaleX(0.9406);-webkit-text-stroke:0.15px #1a1a1a;letter-spacing:0.25px;">under this agreement in its own statement of work (each, a &quot;Statement of Work&quot;), each one including</div>
<div class="t" style="left:138.50px;top:395.80px;font-size:8.1px;color:#1a1a1a;font-weight:400;transform:scaleX(0.9276);-webkit-text-stroke:0.15px #1a1a1a;letter-spacing:0.25px;">a full description of the particular [DELIVERABLE] provided under the Statement of Work,</div>
<div class="t" style="left:138.50px;top:413.80px;font-size:8.1px;color:#1a1a1a;font-weight:400;transform:scaleX(0.9163);-webkit-text-stroke:0.15px #1a1a1a;letter-spacing:0.25px;">the number of [PARTY A]&#x27;s personnel who will be assigned to provide the particular [DELIVERABLE],</div>
<div class="t" style="left:594.60px;top:88.20px;font-size:10.3px;color:#3C68A5;font-weight:400;transform:scaleX(1.0806);-webkit-text-stroke-width:0.05px;">Icertis Experience for Word</div>
<div class="t" style="left:616.00px;top:110.00px;font-size:14px;color:#fff;font-weight:400;transform:scaleX(0.9372);-webkit-text-stroke-width:0.5px;">Icertis</div>
<div class="t" style="left:608.00px;top:134.40px;font-size:8.8px;color:#444;font-weight:400;transform:scaleX(0.9808);">Edit Agreement</div>
<div class="t" style="left:600.50px;top:147.00px;font-size:8.8px;color:#444;font-weight:400;transform:scaleX(0.9149);">6_Automation Prime Contract Amendment_IC...</div>
<div class="t" style="left:600.00px;top:158.00px;font-size:6px;color:#262626;font-weight:700;transform:scaleX(0.9275);">Draft</div>
<div class="t" style="left:635.00px;top:177.00px;font-size:7.8px;color:#444;font-weight:400;transform:scaleX(0.9227);">Details</div>
<div class="t" style="left:729.00px;top:177.00px;font-size:7.8px;color:#fff;font-weight:400;transform:scaleX(0.9227);">Library</div>
<div class="t" style="left:643.00px;top:220.00px;font-size:7.2px;color:#2B579A;font-weight:400;transform:scaleX(0.9097);">Library</div>
<div class="t" style="left:677.00px;top:220.00px;font-size:7.2px;color:#fff;font-weight:400;transform:scaleX(0.9382);">Agreement</div>
<div class="t" style="left:724.00px;top:220.00px;font-size:7.2px;color:#2B579A;font-weight:400;transform:scaleX(0.8496);">Parent</div>
<div class="t" style="left:620.00px;top:238.00px;font-size:7.6px;color:#555;font-weight:400;transform:scaleX(0.8329);">Search Agreement Clauses</div>
<div class="t" style="left:604.00px;top:255.00px;font-size:7.4px;color:#555;font-weight:400;transform:scaleX(0.8800);">Arbitration Clause</div>
<div class="t" style="left:604.00px;top:268.00px;font-size:7.4px;color:#555;font-weight:400;transform:scaleX(0.8810);">Arbitration Multiple Clause</div>
<div class="t" style="left:604.00px;top:281.00px;font-size:7.4px;color:#555;font-weight:400;transform:scaleX(0.8441);">Attorney Fees Clause</div>
<div class="t" style="left:604.00px;top:294.00px;font-size:7.4px;color:#555;font-weight:400;transform:scaleX(0.8672);">Attorney Fees Multiple Clause</div>
<div class="t" style="left:604.00px;top:307.00px;font-size:7.4px;color:#555;font-weight:400;transform:scaleX(0.8577);">HM Clause A</div>
<div class="t" style="left:604.00px;top:320.00px;font-size:7.4px;color:#555;font-weight:400;transform:scaleX(0.8148);">HTML_Clause</div>
<div class="t" style="left:604.00px;top:333.50px;font-size:7.4px;color:#555;font-weight:400;transform:scaleX(0.8111);">None_Clause_1</div>
<div class="t" style="left:604.00px;top:346.30px;font-size:7.4px;color:#555;font-weight:400;transform:scaleX(0.8111);">None_Clause_2</div>
<div class="t" style="left:682.00px;top:252.70px;font-size:7.2px;color:#4a4a4a;font-weight:400;transform:scaleX(0.8784);z-index:6;">Status: Requires Approval</div>
<div class="t" style="left:682.00px;top:262.00px;font-size:7.2px;color:#4a4a4a;font-weight:400;transform:scaleX(0.8960);z-index:6;">Deviated by: Second Approver</div>
<div class="t" style="left:682.00px;top:270.40px;font-size:7.2px;color:#4a4a4a;font-weight:400;transform:scaleX(0.8843);z-index:6;">Deviated on: 2020-07-03T08:32:23</div>
<div class="t" style="left:746.50px;top:284.00px;font-size:7.2px;color:#3E6BB5;font-weight:400;transform:scaleX(0.9027);z-index:6;">View in ICM</div>
<div class="t" style="left:705.00px;top:412.60px;font-size:8.2px;color:#fff;font-weight:400;transform:scaleX(0.9908);-webkit-text-stroke-width:0.45px;">Save</div>
</body></html>
